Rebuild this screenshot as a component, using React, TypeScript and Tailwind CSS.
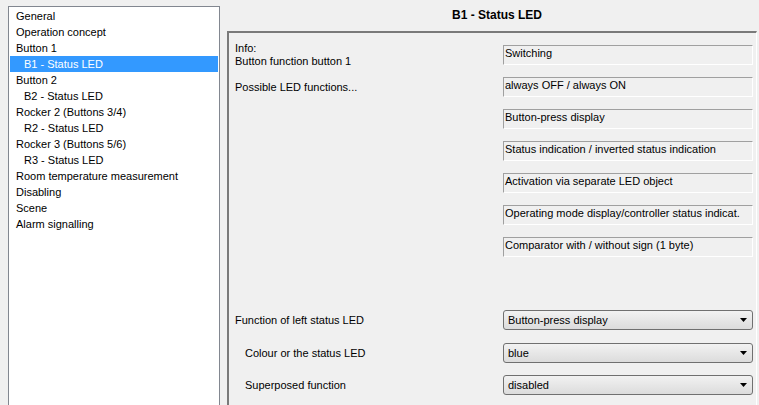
import { ReactElement } from 'react'

const treeItems: { label: string, level: number, selected?: boolean }[] = [
  { label: 'General', level: 0 },
  { label: 'Operation concept', level: 0 },
  { label: 'Button 1', level: 0 },
  { label: 'B1 - Status LED', level: 1, selected: true },
  { label: 'Button 2', level: 0 },
  { label: 'B2 - Status LED', level: 1 },
  { label: 'Rocker 2 (Buttons 3/4)', level: 0 },
  { label: 'R2 - Status LED', level: 1 },
  { label: 'Rocker 3 (Buttons 5/6)', level: 0 },
  { label: 'R3 - Status LED', level: 1 },
  { label: 'Room temperature measurement', level: 0 },
  { label: 'Disabling', level: 0 },
  { label: 'Scene', level: 0 },
  { label: 'Alarm signalling', level: 0 },
]

const ledFunctions = [
  'always OFF / always ON',
  'Button-press display',
  'Status indication / inverted status indication',
  'Activation via separate LED object',
  'Operating mode display/controller status indicat.',
  'Comparator with / without sign (1 byte)',
]

const InfoBox = ({ text }: { text: string }): ReactElement => (
  <div className="w-[250px] h-[20px] border-t border-l border-t-[#a0a0a0] border-l-[#a0a0a0] border-b border-r border-b-white border-r-white pl-[1px] leading-[14px] whitespace-nowrap overflow-hidden">
    {text}
  </div>
)

const Dropdown = ({ value }: { value: string }): ReactElement => (
  <div className="w-[250px] h-[20px] rounded-[3px] border border-[#707070] bg-gradient-to-b from-[#f2f2f2] to-[#dcdcdc] flex items-center pl-[4px] pr-[5px]">
    <span className="flex-1 whitespace-nowrap">{value}</span>
    <svg width="7" height="4" viewBox="0 0 7 4"><path d="M0 0h7L3.5 4z" fill="#000" /></svg>
  </div>
)

export default function App(): ReactElement {
  return (
    <div className="w-[759px] h-[405px] bg-[#f0f0f0] overflow-hidden flex text-[11px] text-black" style={{ fontFamily: '"Liberation Sans", Arial, sans-serif' }}>
      <div className="ml-[8px] mt-[6px] w-[212px] h-[420px] shrink-0 bg-white border border-[#828790] pt-[1px]">
        {treeItems.map(item => (
          <div key={item.label} className={`h-[16px] leading-[16px] mx-[1px] whitespace-nowrap ${item.level === 1 ? 'pl-[14px]' : 'pl-[6px]'} ${item.selected ? 'bg-[#3399ff] text-white' : ''}`}>
            {item.label}
          </div>
        ))}
      </div>
      <div className="ml-[7px] flex flex-col w-[530px] shrink-0">
        <div className="h-[33px] flex items-start justify-center pt-[8px] pl-[10px] font-bold text-[12px] leading-[14px]">B1 - Status LED</div>
        <div className="h-[400px] border-t-2 border-l-2 border-t-[#7a7a7a] border-l-[#7a7a7a] border-r border-r-white pt-[12px] pl-[6px]">
          <div className="flex h-[32px]">
            <div className="w-[268px] leading-[13px] -mt-[3px]">
              <div>Info:</div>
              <div>Button function button 1</div>
            </div>
            <InfoBox text="Switching" />
          </div>
          {ledFunctions.map((f, i) => (
            <div key={f} className="flex h-[32px]">
              <div className="w-[268px] leading-[14px] pt-[3px]">{i === 0 ? 'Possible LED functions...' : ''}</div>
              <InfoBox text={f} />
            </div>
          ))}
          <div className="mt-[41px] flex items-center h-[20px]">
            <div className="w-[268px]">Function of left status LED</div>
            <Dropdown value="Button-press display" />
          </div>
          <div className="mt-[13px] flex items-center h-[20px]">
            <div className="w-[268px] pl-[10px]">Colour or the status LED</div>
            <Dropdown value="blue" />
          </div>
          <div className="mt-[12px] flex items-center h-[20px]">
            <div className="w-[268px] pl-[10px]">Superposed function</div>
            <Dropdown value="disabled" />
          </div>
        </div>
      </div>
    </div>
  )
}
